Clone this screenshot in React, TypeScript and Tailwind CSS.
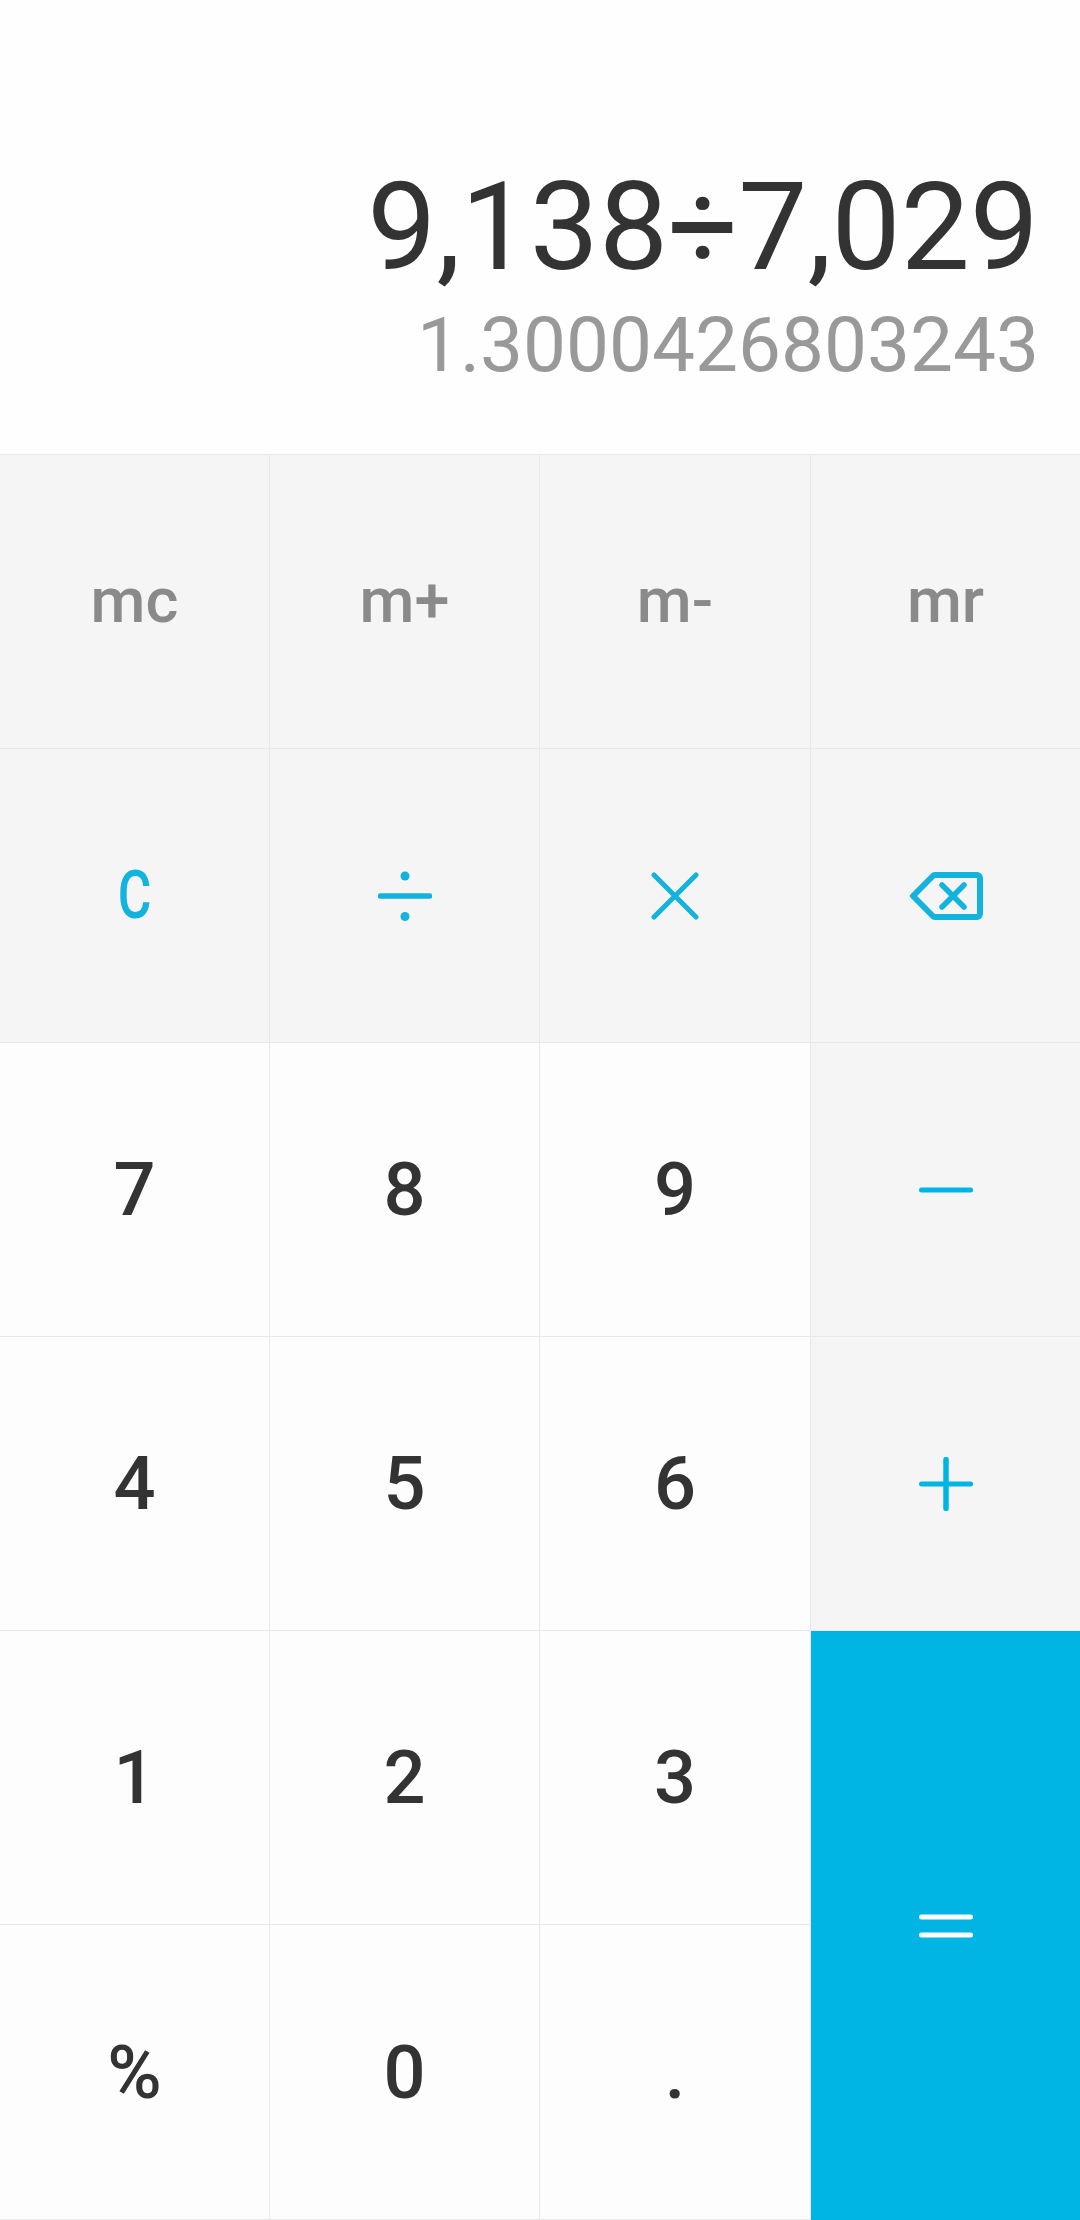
import React from "react";

const cellBase = "flex items-center justify-center border-r border-b border-[#e9e9e9]";
const light = "bg-[#fdfdfd]";
const gray = "bg-[#f5f5f5]";

function Digit({ label }: { label: string }) {
  return (
    <div className={`${cellBase} ${light} text-[74px] font-medium text-[#333333]`}>
      {label}
    </div>
  );
}

function Memory({ label }: { label: string }) {
  return <div className={`${cellBase} ${gray} text-[63px] font-medium text-[#8a8a8a]`}>{label}</div>;
}

function OpKey({ children, last }: { children: React.ReactNode; last?: boolean }) {
  return (
    <div className={`${cellBase} ${gray} ${last ? "border-r-0" : ""}`}>{children}</div>
  );
}

export default function App() {
  return (
    <div className="w-[1080px] h-[2220px] bg-[#fefefe] font-['Roboto',sans-serif] overflow-hidden">
      {/* pantalla */}
      <div className="h-[455px] border-b border-[#e9e9e9] flex flex-col items-end pr-[41px] pt-[152px]">
        <div className="text-[123px] leading-[150px] text-[#333333]">9,138÷7,029</div>
        <div className="text-[76.5px] leading-[86px] text-[#999999]">1.3000426803243</div>
      </div>

      {/* teclado */}
      <div className="grid grid-cols-[270px_270px_271px_269px] grid-rows-[294px_294px_294px_294px_294px_295px] h-[1765px]">
        <Memory label="mc" />
        <Memory label="m+" />
        <Memory label="m-" />
        <div className={`${cellBase} ${gray} border-r-0 text-[63px] font-medium text-[#8a8a8a]`}>mr</div>

        <OpKey>
          <span className="text-[66px] font-medium text-[#12b4dd] scale-x-[0.78]">C</span>
        </OpKey>
        <OpKey>
          <svg width="54" height="50" viewBox="0 0 54 50" fill="none">
            <circle cx="27" cy="5" r="4.5" fill="#12b4dd" />
            <circle cx="27" cy="45.5" r="4.5" fill="#12b4dd" />
            <path d="M2.5 25h49" stroke="#12b4dd" strokeWidth="5.500" strokeLinecap="round" />
          </svg>
        </OpKey>
        <OpKey>
          <svg width="48" height="48" viewBox="0 0 48 48" fill="none">
            <path d="M3 3l42 42M45 3L3 45" stroke="#12b4dd" strokeWidth="5" strokeLinecap="round" />
          </svg>
        </OpKey>
        <OpKey last>
          <svg width="74" height="50" viewBox="0 0 74 50" fill="none">
            <path
              d="M26 4h42a3 3 0 0 1 3 3v36a3 3 0 0 1-3 3H26a3 3 0 0 1-2.200-1L4 25 23.800 5a3 3 0 0 1 2.200-1z"
              stroke="#12b4dd"
              strokeWidth="6"
              strokeLinejoin="round"
            />
            <path d="M33 14l22 22M55 14L33 36" stroke="#12b4dd" strokeWidth="5.500" strokeLinecap="round" />
          </svg>
        </OpKey>

        <Digit label="7" />
        <Digit label="8" />
        <Digit label="9" />
        <OpKey last>
          <svg width="54" height="6" viewBox="0 0 54 6" fill="none">
            <path d="M2.500 3h49" stroke="#00b4e3" strokeWidth="5" strokeLinecap="round" />
          </svg>
        </OpKey>

        <Digit label="4" />
        <Digit label="5" />
        <Digit label="6" />
        <OpKey last>
          <svg width="54" height="54" viewBox="0 0 54 54" fill="none">
            <path d="M2.500 27h49" stroke="#00b4e3" strokeWidth="5" strokeLinecap="round" />
            <path d="M27 2.500v49" stroke="#00b4e3" strokeWidth="5.500" strokeLinecap="round" />
          </svg>
        </OpKey>

        <Digit label="1" />
        <Digit label="2" />
        <Digit label="3" />
        <div className="row-span-2 flex items-center justify-center bg-[#00b5e3]">
          <svg width="54" height="24" viewBox="0 0 54 24" fill="none">
            <path d="M2.500 3h49M2.500 21h49" stroke="#ffffff" strokeWidth="5" strokeLinecap="round" />
          </svg>
        </div>

        <Digit label="%" />
        <Digit label="0" />
        <Digit label="." />
      </div>
    </div>
  );
}
